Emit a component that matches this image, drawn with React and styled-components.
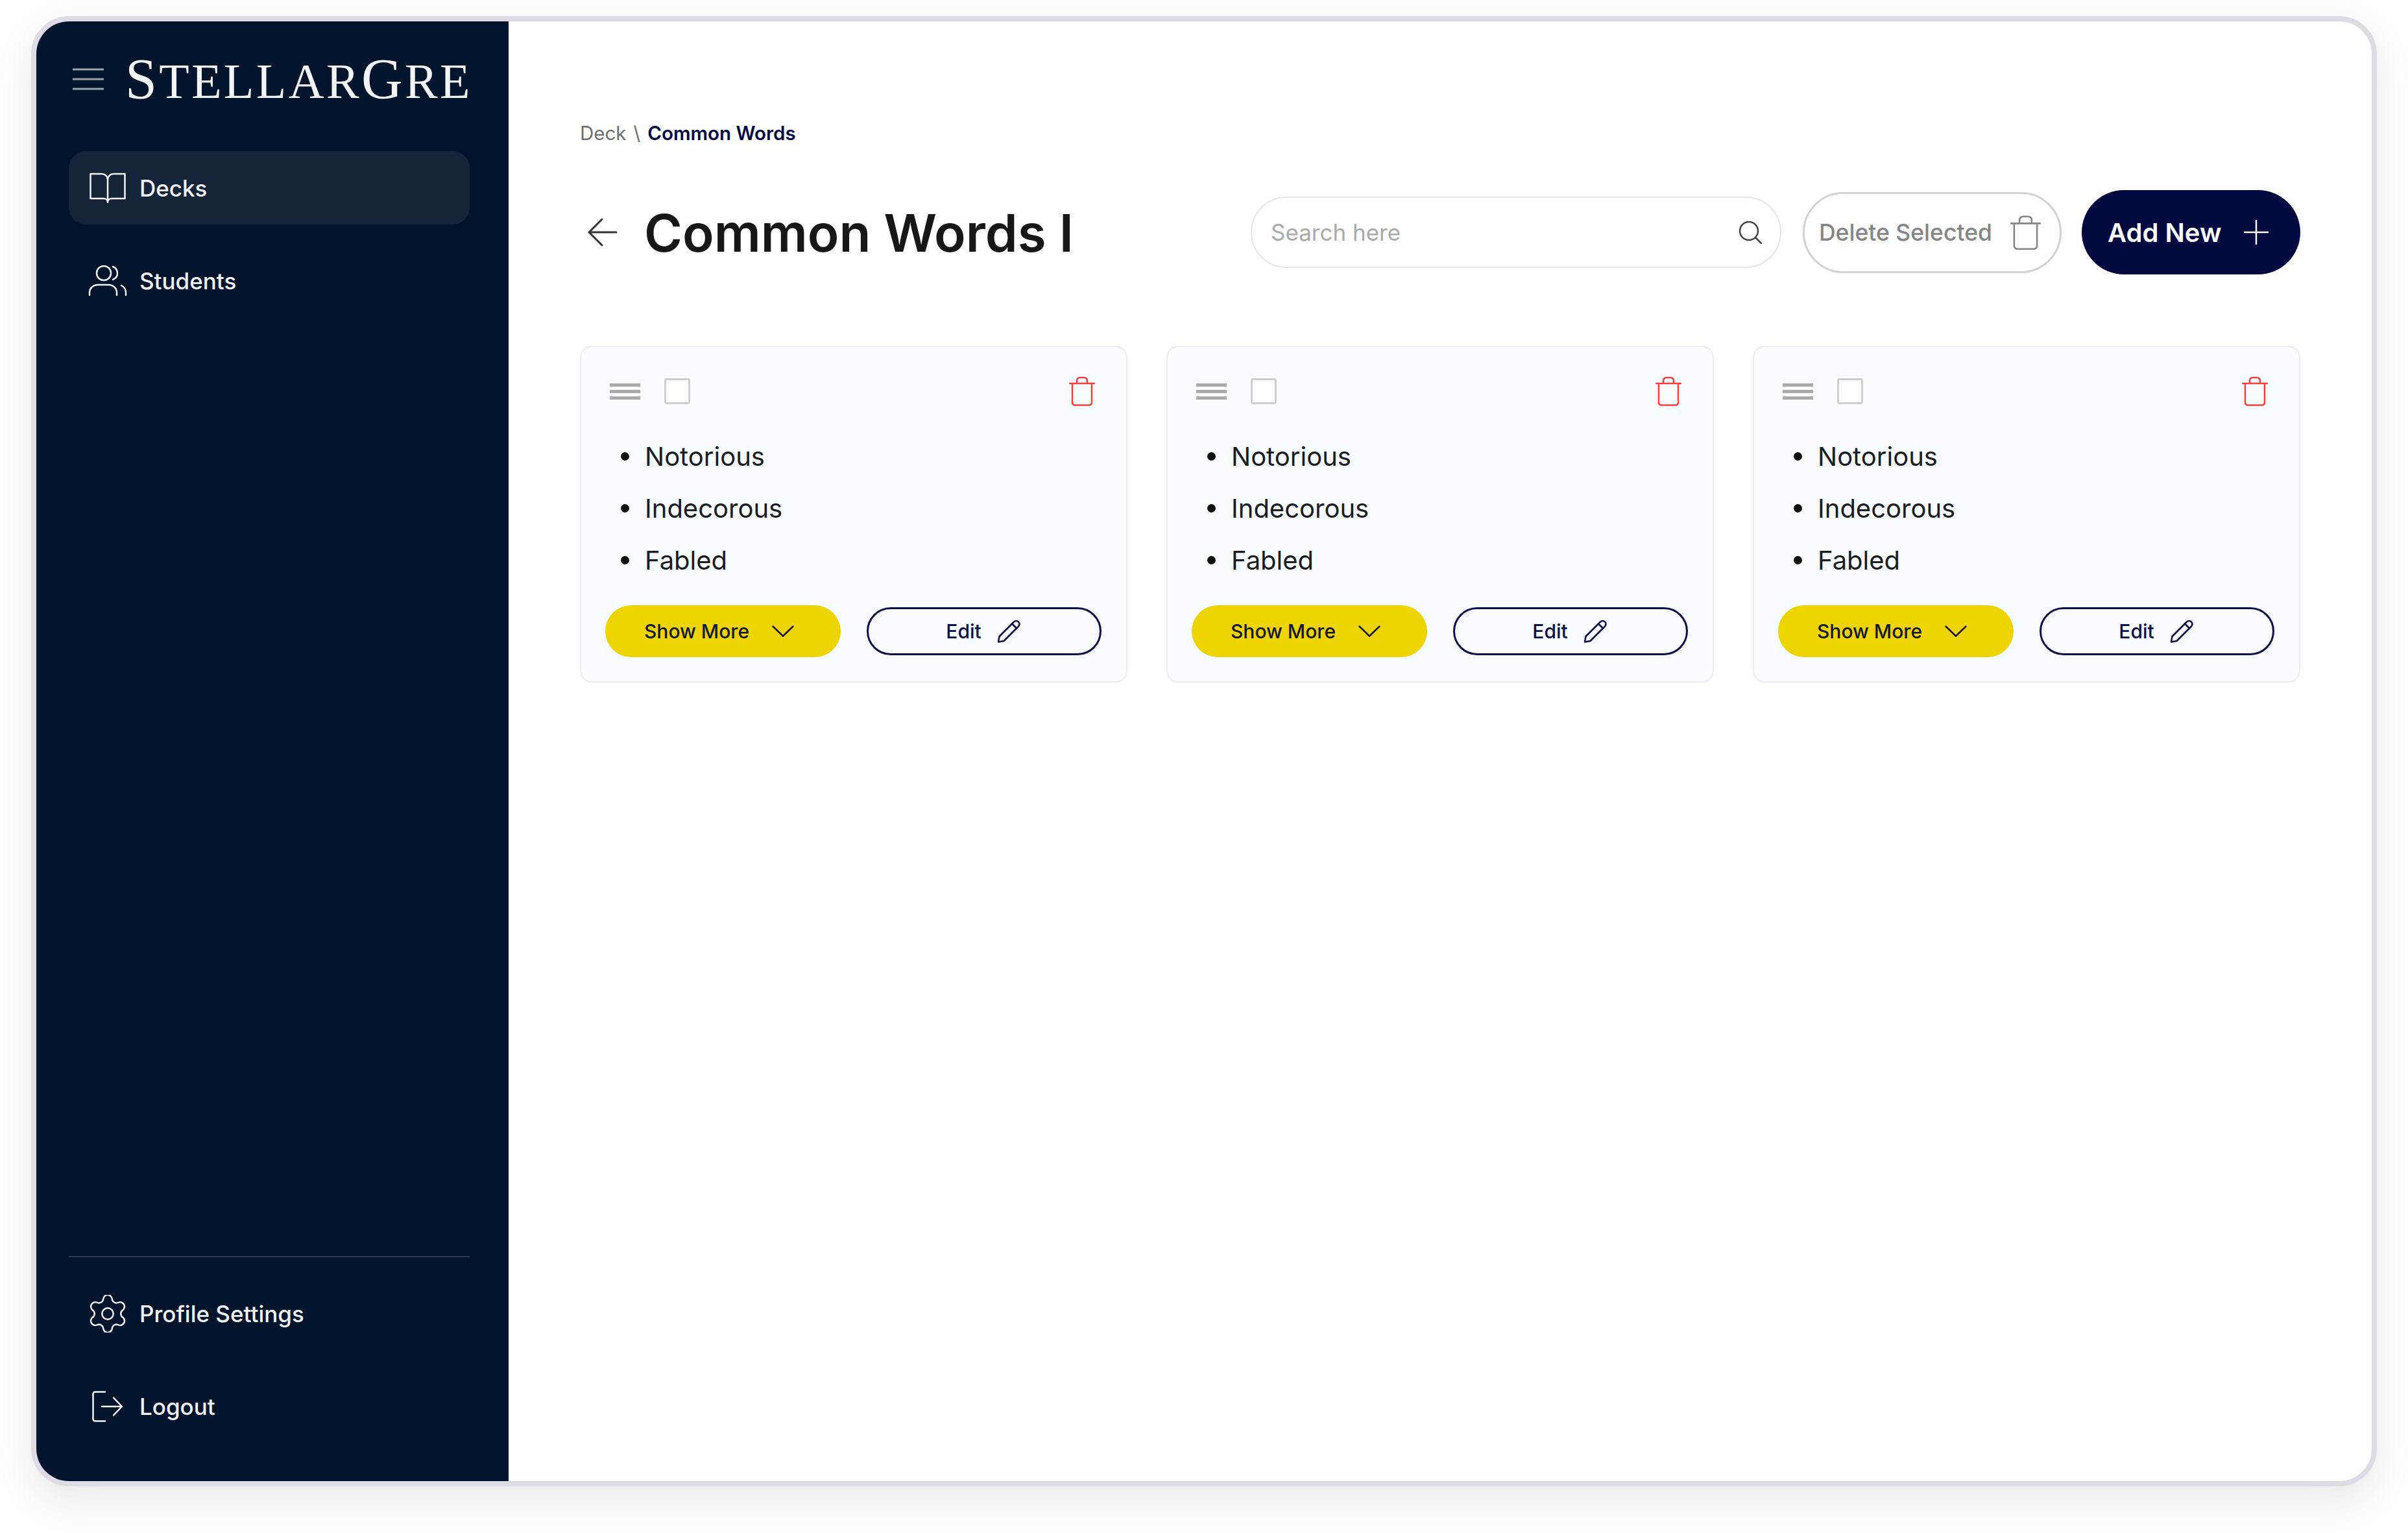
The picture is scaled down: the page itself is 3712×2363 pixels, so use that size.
import React from 'react';
import styled, { createGlobalStyle } from 'styled-components';

const GlobalStyle = createGlobalStyle`
  html, body {
    margin: 0;
    background: #fff;
    font-family: Inter, "Liberation Sans", sans-serif;
  }
  * {
    box-sizing: border-box;
  }
`;

const Page = styled.div`
  width: 3712px;
  height: 2363px;
  padding: 25px 48px 0;
  overflow: hidden;
`;

const Frame = styled.div`
  display: flex;
  height: 2266px;
  background: #fff;
  border: 8px solid #dedbe4;
  border-radius: 58px;
  box-shadow: 0 22px 60px rgba(30, 30, 50, 0.1);
  overflow: hidden;
`;

const Sidebar = styled.aside`
  flex: none;
  display: flex;
  flex-direction: column;
  width: 728px;
  padding: 60px 60px 59px 50px;
  background: #00142c;
`;

const Brand = styled.div`
  display: flex;
  align-items: center;
  height: 58px;
  margin-bottom: 82px;
  padding-left: 5px;
  gap: 32px;
`;

const Logo = styled.div`
  display: flex;
  align-items: baseline;
  height: 58px;
  color: #f3f4f6;
  font-family: "Liberation Serif", serif;
  line-height: 58px;
  letter-spacing: 3.4px;
  white-space: nowrap;
`;

const LogoCap = styled.span`
  font-size: ${(p) => (p.$big ? 88 : 76)}px;
`;

const Nav = styled.nav`
  display: flex;
  flex-direction: column;
  gap: 30px;
`;

const NavItem = styled.a`
  display: flex;
  align-items: center;
  gap: 19px;
  height: 113px;
  padding-left: 30px;
  border-radius: 26px;
  background: ${(p) => (p.$active ? '#16243a' : 'transparent')};
  color: #f1f3f6;
  font-size: 35px;
  font-weight: 500;
`;

const NavIcon = styled.span`
  flex: none;
  display: flex;
  justify-content: center;
  width: 60px;
`;

const Footer = styled.div`
  display: flex;
  flex-direction: column;
  gap: 30px;
  margin-top: auto;
  padding-top: 30px;
  border-top: 2px solid #2a3a50;
`;

const Main = styled.main`
  flex: 1;
  min-width: 0;
  padding: 152px 110px 0;
`;

const Breadcrumb = styled.div`
  display: flex;
  align-items: center;
  gap: 11px;
  height: 40px;
  margin: 0 0 68px;
  color: #6f6f6f;
  font-size: 29.5px;
`;

const Current = styled.span`
  color: #03093f;
  font-weight: 600;
`;

const HeaderRow = styled.div`
  display: flex;
  align-items: center;
  height: 130px;
  margin-bottom: 110px;
`;

const BackArrow = styled.svg`
  flex: none;
  width: 46px;
  height: 44px;
  margin: 0 41px 0 12px;
  color: #333;
`;

const Title = styled.h1`
  margin: 0;
  color: #171717;
  font-size: 80px;
  font-weight: 600;
  white-space: nowrap;
`;

const Tools = styled.div`
  display: flex;
  align-items: center;
  gap: 31px;
  margin-left: auto;
`;

const Search = styled.div`
  display: flex;
  align-items: center;
  justify-content: space-between;
  width: 818px;
  height: 110px;
  margin-right: 2px;
  padding: 0 28px 0 29px;
  border: 2px solid #e6e6e6;
  border-radius: 55px;
  color: #aaa;
  font-size: 35px;
`;

const DeleteButton = styled.button`
  display: flex;
  align-items: center;
  gap: 28px;
  width: 399px;
  height: 125px;
  padding: 0 0 0 22px;
  border: 3px solid #d2d2d2;
  border-radius: 63px;
  background: #fff;
  color: #858585;
  font-family: inherit;
  font-size: 35.5px;
  font-weight: 500;
  white-space: nowrap;
`;

const AddButton = styled.button`
  display: flex;
  align-items: center;
  gap: 33px;
  width: 337px;
  height: 130px;
  padding: 0 0 0 40px;
  border: 0;
  border-radius: 65px;
  background: #01093f;
  color: #fff;
  font-family: inherit;
  font-size: 40px;
  font-weight: 600;
  white-space: nowrap;
`;

const CardGrid = styled.div`
  display: grid;
  grid-template-columns: repeat(3, 844px);
  gap: 60px;
`;

const Card = styled.section`
  height: 519px;
  padding: 46px 38px 37px 37px;
  border: 2px solid #eceef2;
  border-radius: 18px;
  background: #f8fbff;
`;

const CardTop = styled.div`
  display: flex;
  align-items: center;
  height: 44px;
  padding: 0 10px 0 7px;
`;

const Handle = styled.span`
  flex: none;
  display: flex;
  flex-direction: column;
  gap: 5px;
  width: 47px;
  margin-right: 37px;
  &::before,
  &::after,
  i {
    content: '';
    display: block;
    height: 5px;
    background: #aaa;
  }
`;

const Check = styled.span`
  flex: none;
  width: 40px;
  height: 40px;
  border: 3px solid #cfcfd2;
  border-radius: 4px;
  background: #fff;
`;

const RedBin = styled.span`
  display: flex;
  margin-left: auto;
  color: #f5413c;
`;

const Words = styled.ul`
  margin: 38px 0 30px;
  padding: 0;
  list-style: none;
`;

const Word = styled.li`
  display: flex;
  align-items: center;
  gap: 24px;
  height: 80px;
  padding-left: 24px;
  color: #1c1c1c;
  font-size: 40px;
  &::before {
    content: '';
    width: 13px;
    height: 13px;
    border-radius: 50%;
    background: #111;
  }
`;

const CardActions = styled.div`
  display: grid;
  grid-template-columns: 363px 362px;
  gap: 40px;
  align-items: center;
`;

const ShowMore = styled.button`
  display: flex;
  align-items: center;
  justify-content: center;
  gap: 35px;
  height: 80px;
  padding: 0 12px 0 0;
  border: 0;
  border-radius: 40px;
  background: #eed400;
  color: #14163a;
  font-family: inherit;
  font-size: 30px;
  font-weight: 500;
`;

const EditButton = styled.button`
  display: flex;
  align-items: center;
  justify-content: center;
  gap: 24px;
  height: 74px;
  padding: 0 2px 0 0;
  border: 3px solid #0d1148;
  border-radius: 37px;
  background: transparent;
  color: #0d1148;
  font-family: inherit;
  font-size: 30px;
  font-weight: 500;
`;

const Stroke = ({ w, h, sw = 2.5, children }) => (
  <svg width={w} height={h} viewBox={`0 0 ${w} ${h}`} fill="none" stroke="currentColor" strokeWidth={sw} strokeLinecap="round" strokeLinejoin="round">
    {children}
  </svg>
);

const MenuIcon = () => (
  <span style={{ display: 'flex', color: '#9aa1ab' }}>
    <Stroke w={50} h={36} sw={3}>
      <path d="M1 3H49M1 18H49M1 33H49" strokeLinecap="butt" />
    </Stroke>
  </span>
);

const BookIcon = () => (
  <Stroke w={56} h={48}>
    <path d="M1.5 2H19C24 2 28 6 28 11V46M28 11C28 6 32 2 37 2H54.500V40H34C31 40 28 42 28 46M1.500 2V40H22C25 40 28 42 28 46" />
  </Stroke>
);

const UsersIcon = () => (
  <Stroke w={60} h={47}>
    <circle cx="24" cy="12" r="11" />
    <path d="M38 2C43 4 45 8 45 12C45 16 43 20 38 22M2 46V42C2 35 8 30 15 30H31C38 30 44 35 44 42V46M51 31C55 33 58 37 58 42V46" />
  </Stroke>
);

const GearIcon = () => (
  <svg width="58" height="58" viewBox="2 2 20 20" fill="none" stroke="currentColor" strokeWidth="0.85" strokeLinecap="round" strokeLinejoin="round">
    <path d="M9.671 4.136a2.34 2.34 0 0 1 4.659 0 2.34 2.34 0 0 0 3.319 1.915 2.34 2.34 0 0 1 2.33 4.033 2.34 2.34 0 0 0 0 3.831 2.34 2.34 0 0 1-2.33 4.033 2.34 2.34 0 0 0-3.319 1.915 2.34 2.34 0 0 1-4.659 0 2.34 2.34 0 0 0-3.32-1.915 2.34 2.34 0 0 1-2.33-4.033 2.34 2.34 0 0 0 0-3.831A2.34 2.34 0 0 1 6.35 6.051a2.34 2.34 0 0 0 3.319-1.915" />
    <circle cx="12" cy="12" r="3" />
  </svg>
);

const LogoutIcon = () => (
  <Stroke w={48} h={48}>
    <path d="M20 1.500H5Q1.500 1.500 1.500 5V43Q1.500 46.500 5 46.500H20M15 24H46M33 10.500L46 24L33 37.500" />
  </Stroke>
);

const BinIcon = ({ w = 40, h = 46, sw = 2.5 }) => (
  <svg width={w} height={h} viewBox="0 0 40 46" fill="none" stroke="currentColor" strokeWidth={sw} strokeLinecap="round" strokeLinejoin="round">
    <path d="M1 11H39M12 11V7Q12 2 17 2H23Q28 2 28 7V11M5 11V40Q5 44.500 9.500 44.500H30.500Q35 44.500 35 40V11" />
  </svg>
);

const SearchIcon = () => (
  <span style={{ display: 'flex', color: '#444' }}>
    <Stroke w={36} h={36}>
      <circle cx="16" cy="16" r="14" />
      <path d="M26.500 26.500L35 35" />
    </Stroke>
  </span>
);

const PlusIcon = () => (
  <Stroke w={40} h={40}>
    <path d="M20 1V39M1 20H39" strokeLinecap="butt" />
  </Stroke>
);

const ChevronIcon = () => (
  <Stroke w={34} h={18}>
    <path d="M1.500 1.500L17 16.500L32.500 1.500" />
  </Stroke>
);

const PencilIcon = () => (
  <svg width="37" height="36" viewBox="0 0 37 36" fill="none" stroke="currentColor" strokeWidth="2.500" strokeLinecap="round" strokeLinejoin="round">
    <path d="M2 34.500L3.500 26L26 3.500Q29.500 0.500 33 3.500Q36 7 33 10.500L10.500 33Z" />
    <path d="M23 6.500L30 13.500" />
  </svg>
);

const words = ['Notorious', 'Indecorous', 'Fabled'];

const DeckCard = () => (
  <Card>
    <CardTop>
      <Handle>
        <i />
      </Handle>
      <Check />
      <RedBin>
        <BinIcon />
      </RedBin>
    </CardTop>
    <Words>
      {words.map((word) => (
        <Word key={word}>{word}</Word>
      ))}
    </Words>
    <CardActions>
      <ShowMore>
        Show More
        <ChevronIcon />
      </ShowMore>
      <EditButton>
        Edit
        <PencilIcon />
      </EditButton>
    </CardActions>
  </Card>
);

const App = () => (
  <Page>
    <GlobalStyle />
    <Frame>
      <Sidebar>
        <Brand>
          <MenuIcon />
          <Logo>
            <LogoCap $big>S</LogoCap>
            <LogoCap>TELLAR</LogoCap>
            <LogoCap $big>G</LogoCap>
            <LogoCap>RE</LogoCap>
          </Logo>
        </Brand>
        <Nav>
          <NavItem $active>
            <NavIcon>
              <BookIcon />
            </NavIcon>
            Decks
          </NavItem>
          <NavItem>
            <NavIcon>
              <UsersIcon />
            </NavIcon>
            Students
          </NavItem>
        </Nav>
        <Footer>
          <NavItem>
            <NavIcon>
              <GearIcon />
            </NavIcon>
            Profile Settings
          </NavItem>
          <NavItem>
            <NavIcon>
              <LogoutIcon />
            </NavIcon>
            Logout
          </NavItem>
        </Footer>
      </Sidebar>
      <Main>
        <Breadcrumb>
          <span>Deck</span>
          <span>\</span>
          <Current>Common Words</Current>
        </Breadcrumb>
        <HeaderRow>
          <BackArrow viewBox="0 0 46 44" fill="none" stroke="currentColor" strokeWidth="3" strokeLinecap="round" strokeLinejoin="round">
            <path d="M44 22H2M22 2L2 22L22 42" />
          </BackArrow>
          <Title>Common Words I</Title>
          <Tools>
            <Search>
              Search here
              <SearchIcon />
            </Search>
            <DeleteButton>
              Delete Selected
              <BinIcon w={47} h={55} sw={2.2} />
            </DeleteButton>
            <AddButton>
              Add New
              <PlusIcon />
            </AddButton>
          </Tools>
        </HeaderRow>
        <CardGrid>
          <DeckCard />
          <DeckCard />
          <DeckCard />
        </CardGrid>
      </Main>
    </Frame>
  </Page>
);

export default App;
